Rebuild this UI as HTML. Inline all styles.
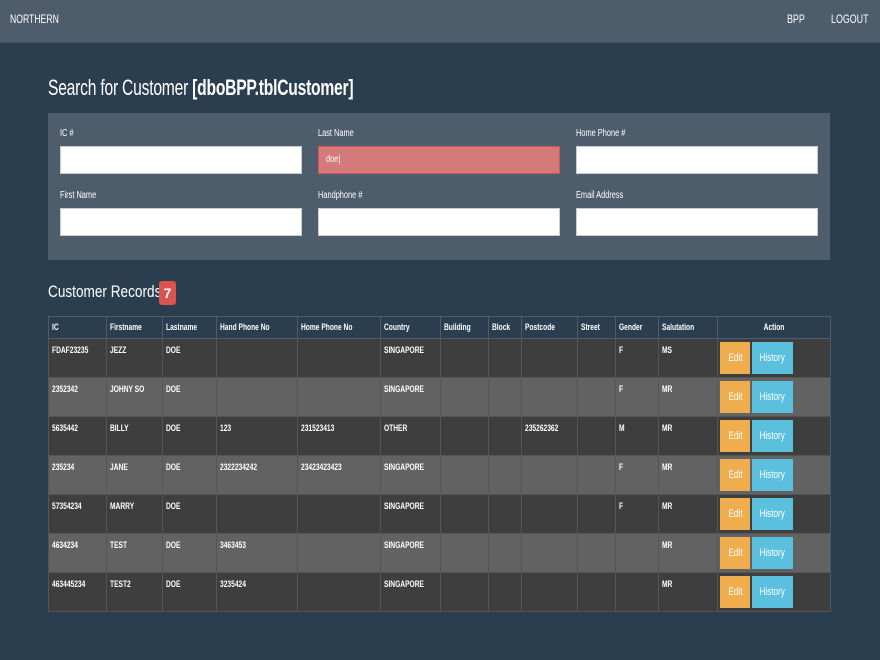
<!DOCTYPE html>
<html><head><meta charset="utf-8"><style>
*{box-sizing:border-box;margin:0;padding:0}
body{width:880px;height:660px;overflow:hidden;background:#2b3e50;color:#fff;font-family:"Liberation Sans",sans-serif;position:relative}
i{font-style:normal;display:inline-block;transform:scaleX(.74);transform-origin:0 50%;white-space:nowrap}
.nav{position:absolute;left:0;top:0;width:880px;height:43px;background:#4e5d6c;border-bottom:1px solid #3e4f5f}
.nav span{position:absolute;top:12px;font-size:12px}
h1{position:absolute;left:48px;top:75px;font-size:22px;font-weight:normal;letter-spacing:-0.3px}
h1 b{font-weight:bold}
.panel{position:absolute;left:48px;top:113px;width:782px;height:147px;background:#4e5d6c}
.lbl{position:absolute;font-size:10px}
.inp{position:absolute;width:242px;height:28px;background:#fff;border:1px solid #ccc}
h2{position:absolute;left:48px;top:282px;font-size:17px;font-weight:normal}
.badge{position:absolute;left:159px;top:281px;width:17px;height:24px;background:#d9534f;border-radius:3px;font-size:14px;font-weight:bold;text-align:center;line-height:24px}
table{position:absolute;left:48px;top:316px;width:782px;border-collapse:collapse;table-layout:fixed;font-size:9px;font-weight:bold}
td,th{border:1px solid #4e5d6c;text-align:left;vertical-align:top;padding:4px 3px;overflow:hidden;white-space:nowrap}
th{height:22px;font-weight:bold;background:#2b3e50;padding-top:5px}
td{height:39px;padding-top:6px;border-color:#555}
tr.o td{background:#3e3e3e}
tr.e td{background:#626262}
th.c{text-align:center}
.btn{display:inline-block;height:32px;line-height:32px;font-size:11px;font-weight:normal;text-align:center;vertical-align:top;overflow:hidden}
.btn i{transform-origin:50% 50%}
.ed{width:30px;background:#f0ad4e}
.hi{width:41px;background:#5bc0de;margin-left:2px}
td.a{padding:3px 2px 3px 2px}
</style></head><body>
<div class="nav"><span style="left:10px"><i style="transform:scaleX(.72)">NORTHERN</i></span><span style="left:787px"><i>BPP</i></span><span style="left:831px"><i>LOGOUT</i></span></div>
<h1><i style="transform:scaleX(.71)">Search for Customer <b>[dboBPP.tblCustomer]</b></i></h1>
<div class="panel">
<div class="lbl" style="left:12px;top:15px"><i>IC #</i></div>
<div class="lbl" style="left:270px;top:15px"><i>Last Name</i></div>
<div class="lbl" style="left:528px;top:15px"><i>Home Phone #</i></div>
<div class="inp" style="left:12px;top:33px"></div>
<div class="inp" style="left:270px;top:33px;background:#d47a7a;border:1px solid #d9534f;font-size:10px;padding:7px 7px"><i>doe|</i></div>
<div class="inp" style="left:528px;top:33px"></div>
<div class="lbl" style="left:12px;top:77px"><i>First Name</i></div>
<div class="lbl" style="left:270px;top:77px"><i>Handphone #</i></div>
<div class="lbl" style="left:528px;top:77px"><i>Email Address</i></div>
<div class="inp" style="left:12px;top:95px"></div>
<div class="inp" style="left:270px;top:95px"></div>
<div class="inp" style="left:528px;top:95px"></div>
</div>
<h2><i style="transform:scaleX(.8)">Customer Records</i></h2><div class="badge">7</div>
<table>
<colgroup><col style="width:58px"><col style="width:56px"><col style="width:54px"><col style="width:81px"><col style="width:83px"><col style="width:60px"><col style="width:48px"><col style="width:33px"><col style="width:56px"><col style="width:38px"><col style="width:43px"><col style="width:59px"><col style="width:113px"></colgroup>
<tr><th><i>IC</i></th><th><i>Firstname</i></th><th><i>Lastname</i></th><th><i>Hand Phone No</i></th><th><i>Home Phone No</i></th><th><i>Country</i></th><th><i>Building</i></th><th><i>Block</i></th><th><i>Postcode</i></th><th><i>Street</i></th><th><i>Gender</i></th><th><i>Salutation</i></th><th class="c"><i style="transform-origin:50% 50%">Action</i></th></tr>
<tr class="o"><td><i>FDAF23235</i></td><td><i>JEZZ</i></td><td><i>DOE</i></td><td></td><td></td><td><i>SINGAPORE</i></td><td></td><td></td><td></td><td></td><td><i>F</i></td><td><i>MS</i></td><td class="a"><span class="btn ed"><i>Edit</i></span><span class="btn hi"><i>History</i></span></td></tr>
<tr class="e"><td><i>2352342</i></td><td><i>JOHNY SO</i></td><td><i>DOE</i></td><td></td><td></td><td><i>SINGAPORE</i></td><td></td><td></td><td></td><td></td><td><i>F</i></td><td><i>MR</i></td><td class="a"><span class="btn ed"><i>Edit</i></span><span class="btn hi"><i>History</i></span></td></tr>
<tr class="o"><td><i>5635442</i></td><td><i>BILLY</i></td><td><i>DOE</i></td><td><i>123</i></td><td><i>231523413</i></td><td><i>OTHER</i></td><td></td><td></td><td><i>235262362</i></td><td></td><td><i>M</i></td><td><i>MR</i></td><td class="a"><span class="btn ed"><i>Edit</i></span><span class="btn hi"><i>History</i></span></td></tr>
<tr class="e"><td><i>235234</i></td><td><i>JANE</i></td><td><i>DOE</i></td><td><i>2322234242</i></td><td><i>23423423423</i></td><td><i>SINGAPORE</i></td><td></td><td></td><td></td><td></td><td><i>F</i></td><td><i>MR</i></td><td class="a"><span class="btn ed"><i>Edit</i></span><span class="btn hi"><i>History</i></span></td></tr>
<tr class="o"><td><i>57354234</i></td><td><i>MARRY</i></td><td><i>DOE</i></td><td></td><td></td><td><i>SINGAPORE</i></td><td></td><td></td><td></td><td></td><td><i>F</i></td><td><i>MR</i></td><td class="a"><span class="btn ed"><i>Edit</i></span><span class="btn hi"><i>History</i></span></td></tr>
<tr class="e"><td><i>4634234</i></td><td><i>TEST</i></td><td><i>DOE</i></td><td><i>3463453</i></td><td></td><td><i>SINGAPORE</i></td><td></td><td></td><td></td><td></td><td></td><td><i>MR</i></td><td class="a"><span class="btn ed"><i>Edit</i></span><span class="btn hi"><i>History</i></span></td></tr>
<tr class="o"><td><i>463445234</i></td><td><i>TEST2</i></td><td><i>DOE</i></td><td><i>3235424</i></td><td></td><td><i>SINGAPORE</i></td><td></td><td></td><td></td><td></td><td></td><td><i>MR</i></td><td class="a"><span class="btn ed"><i>Edit</i></span><span class="btn hi"><i>History</i></span></td></tr>
</table>
</body></html>
